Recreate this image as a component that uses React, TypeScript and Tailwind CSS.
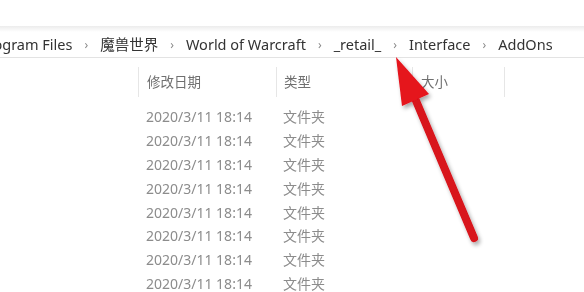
import React from 'react';

const crumbs = ['Program Files', '魔兽世界', 'World of Warcraft', '_retail_', 'Interface', 'AddOns'];
const rows = Array.from({ length: 8 });

function Chevron() {
  return <span className="px-[12px] text-[12px] text-[#8a8a8a]">›</span>;
}

export default function App() {
  return (
    <div
      className="relative h-[292px] w-[584px] overflow-hidden bg-white blur-[0.4px]"
      style={{ fontFamily: '"Noto Sans", "Noto Sans CJK SC", sans-serif' }}
    >
      <div className="h-[26px]" />
      <div className="h-[6px] bg-gradient-to-b from-[#ececec] to-white" />
      <div className="flex h-[26px] items-center border-b border-[#e3e3e3] text-[14.5px] text-[#333]">
        <div className="-ml-[21px] flex items-center whitespace-nowrap">
          {crumbs.map((c, i) => (
            <React.Fragment key={c}>
              {i > 0 && <Chevron />}
              <span>{c}</span>
            </React.Fragment>
          ))}
        </div>
      </div>
      <div className="h-[9px]" />
      <div className="flex h-[30px] items-center text-[13.5px] text-[#707070]">
        <div className="w-[138px]" />
        <div className="flex h-full w-[138px] items-center border-l border-[#e6e6e6] pl-[8px]">修改日期</div>
        <div className="flex h-full w-[136px] items-center border-l border-[#e6e6e6] pl-[7px]">类型</div>
        <div className="flex h-full w-[92px] items-center border-l border-[#e6e6e6] pl-[8px]">大小</div>
        <div className="h-full border-l border-[#e6e6e6]" />
      </div>
      <div className="h-[8px]" />
      <div className="flex flex-col text-[14px] text-[#8c8c8c]">
        {rows.map((_, i) => (
          <div key={i} className="flex h-[23.8px] items-center">
            <div className="w-[146px]" />
            <div className="w-[137px]">2020/3/11 18:14</div>
            <div>文件夹</div>
          </div>
        ))}
      </div>
      <svg className="absolute left-0 top-0" width="584" height="292" viewBox="0 0 584 292">
        <defs>
          <filter id="sh" x="-20%" y="-20%" width="140%" height="140%">
            <feGaussianBlur in="SourceAlpha" stdDeviation="2" />
            <feOffset dx="2" dy="3" result="b" />
            <feComponentTransfer><feFuncA type="linear" slope="0.35" /></feComponentTransfer>
            <feMerge><feMergeNode /><feMergeNode in="SourceGraphic" /></feMerge>
          </filter>
        </defs>
        <g filter="url(#sh)">
          <line x1="414" y1="96" x2="474" y2="238" stroke="#d8121a" strokeWidth="8" strokeLinecap="round" />
          <polygon points="396,57 429,94 402,106" fill="#e5121b" />
        </g>
      </svg>
    </div>
  );
}
